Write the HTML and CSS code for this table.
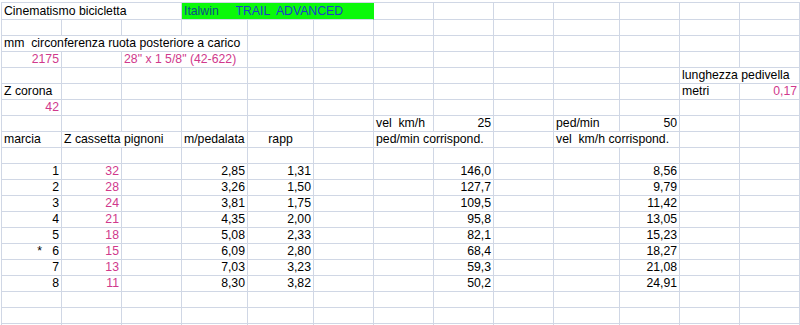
FILE: index.html
```html
<!DOCTYPE html>
<html lang="it">
<head>
<meta charset="utf-8">
<title>Cinematismo bicicletta</title>
<link rel="stylesheet" href="styles.css">
</head>
<body>
<table class="sheet">
  <colgroup>
    <col class="c60"><col class="c60"><col class="c60"><col class="c66"><col class="c66"><col class="c60"><col class="c60"><col class="c60"><col class="c60"><col class="c66"><col class="c60"><col class="c60"><col class="c60">
  </colgroup>
  <tbody>
    <tr class="first">
      <td colspan="3">Cinematismo bicicletta</td>
      <td colspan="3" class="green"><span class="brand">Italwin</span>     <span class="model">TRAIL  ADVANCED</span></td>
      <td></td><td></td><td></td><td></td><td></td><td></td><td></td>
    </tr>
    <tr><td></td><td></td><td></td><td></td><td></td><td></td><td></td><td></td><td></td><td></td><td></td><td></td><td></td></tr>
    <tr>
      <td colspan="4">mm  circonferenza ruota posteriore a carico</td>
      <td></td><td></td><td></td><td></td><td></td><td></td><td></td><td></td><td></td>
    </tr>
    <tr>
      <td class="num pink">2175</td><td></td>
      <td colspan="2" class="pink">28" x 1 5/8" (42-622)</td>
      <td></td><td></td><td></td><td></td><td></td><td></td><td></td><td></td><td></td>
    </tr>
    <tr>
      <td></td><td></td><td></td><td></td><td></td><td></td><td></td><td></td><td></td><td></td><td></td>
      <td colspan="2">lunghezza pedivella</td>
    </tr>
    <tr>
      <td>Z corona</td>
      <td></td><td></td><td></td><td></td><td></td><td></td><td></td><td></td><td></td><td></td>
      <td>metri</td><td class="num pink">0,17</td>
    </tr>
    <tr>
      <td class="num pink">42</td>
      <td></td><td></td><td></td><td></td><td></td><td></td><td></td><td></td><td></td><td></td><td></td><td></td>
    </tr>
    <tr>
      <td></td><td></td><td></td><td></td><td></td><td></td>
      <td>vel  km/h</td><td class="num">25</td><td></td>
      <td>ped/min</td><td class="num">50</td><td></td><td></td>
    </tr>
    <tr>
      <td>marcia</td>
      <td colspan="2">Z cassetta pignoni</td>
      <td>m/pedalata</td>
      <td class="center">rapp</td>
      <td></td>
      <td colspan="2">ped/min corrispond.</td>
      <td></td>
      <td colspan="2">vel  km/h corrispond.</td>
      <td></td><td></td>
    </tr>
    <tr><td></td><td></td><td></td><td></td><td></td><td></td><td></td><td></td><td></td><td></td><td></td><td></td><td></td></tr>
    <tr>
      <td class="num">1</td><td class="num pink">32</td><td></td><td class="num">2,85</td><td class="num">1,31</td><td></td><td></td><td class="num">146,0</td><td></td><td></td><td class="num">8,56</td><td></td><td></td>
    </tr>
    <tr>
      <td class="num">2</td><td class="num pink">28</td><td></td><td class="num">3,26</td><td class="num">1,50</td><td></td><td></td><td class="num">127,7</td><td></td><td></td><td class="num">9,79</td><td></td><td></td>
    </tr>
    <tr>
      <td class="num">3</td><td class="num pink">24</td><td></td><td class="num">3,81</td><td class="num">1,75</td><td></td><td></td><td class="num">109,5</td><td></td><td></td><td class="num">11,42</td><td></td><td></td>
    </tr>
    <tr>
      <td class="num">4</td><td class="num pink">21</td><td></td><td class="num">4,35</td><td class="num">2,00</td><td></td><td></td><td class="num">95,8</td><td></td><td></td><td class="num">13,05</td><td></td><td></td>
    </tr>
    <tr>
      <td class="num">5</td><td class="num pink">18</td><td></td><td class="num">5,08</td><td class="num">2,33</td><td></td><td></td><td class="num">82,1</td><td></td><td></td><td class="num">15,23</td><td></td><td></td>
    </tr>
    <tr>
      <td class="num">*   6</td><td class="num pink">15</td><td></td><td class="num">6,09</td><td class="num">2,80</td><td></td><td></td><td class="num">68,4</td><td></td><td></td><td class="num">18,27</td><td></td><td></td>
    </tr>
    <tr>
      <td class="num">7</td><td class="num pink">13</td><td></td><td class="num">7,03</td><td class="num">3,23</td><td></td><td></td><td class="num">59,3</td><td></td><td></td><td class="num">21,08</td><td></td><td></td>
    </tr>
    <tr>
      <td class="num">8</td><td class="num pink">11</td><td></td><td class="num">8,30</td><td class="num">3,82</td><td></td><td></td><td class="num">50,2</td><td></td><td></td><td class="num">24,91</td><td></td><td></td>
    </tr>
    <tr><td></td><td></td><td></td><td></td><td></td><td></td><td></td><td></td><td></td><td></td><td></td><td></td><td></td></tr>
    <tr><td></td><td></td><td></td><td></td><td></td><td></td><td></td><td></td><td></td><td></td><td></td><td></td><td></td></tr>
    <tr><td></td><td></td><td></td><td></td><td></td><td></td><td></td><td></td><td></td><td></td><td></td><td></td><td></td></tr>
  </tbody>
</table>
</body>
</html>
```

FILE: styles.css
```css
html, body {
  margin: 0;
  padding: 0;
  background: #ffffff;
  overflow: hidden;
}

.sheet {
  margin: 2px 0 0 1px;
  border-collapse: separate;
  border-spacing: 0;
  table-layout: fixed;
  width: 799px;
  border-top: 1px solid #d0d7e5;
  border-left: 1px solid #d0d7e5;
  font-family: "Liberation Sans", Arial, sans-serif;
  font-size: 12.25px;
  line-height: 15px;
  color: #000000;
}

.c60 { width: 60px; }
.c66 { width: 66px; }

.sheet tr { height: 16px; }
.sheet tr.first { height: 17px; }

.sheet td {
  box-sizing: border-box;
  padding: 0 2px;
  border-right: 1px solid #d0d7e5;
  border-bottom: 1px solid #d0d7e5;
  vertical-align: bottom;
  white-space: pre;
  overflow: visible;
  text-align: left;
}

.sheet td.num { text-align: right; }
.sheet td.center { text-align: center; }
.pink { color: #d0388c; }

.sheet td.green {
  background: #0af90a;
  border-right-color: #0af90a;
}
.brand { color: #0c4d86; }
.model { color: #1c3dcc; }
```
